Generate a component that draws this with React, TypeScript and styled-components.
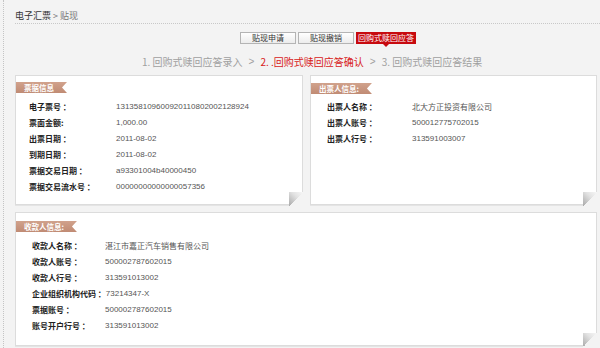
import React from "react";
import styled, { createGlobalStyle } from "styled-components";

const GlobalStyle = createGlobalStyle`
  html, body {
    margin: 0;
    padding: 0;
    background: #f3f3f3;
    font-family: "Noto Sans CJK SC", "Noto Sans", sans-serif;
  }
  * { box-sizing: border-box; }
`;

const Frame = styled.div`
  margin-left: 3px;
  border-left: 1px dotted #c4c4c4;
  min-height: 348px;
  padding: 0 3px 0 11px;
  overflow: hidden;
`;

const Header = styled.div`
  padding-top: 9px;
  line-height: 14px;
  font-size: 9px;
  color: #333;
  border-bottom: 1px dotted #c8c8c8;
  margin-right: -3px;
`;

const Crumb = styled.span`
  color: #777;
`;

const Tabs = styled.div`
  display: flex;
  margin-top: 8px;
  padding-left: 225px;
  gap: 2px;
`;

const Tab = styled.div<{ $active?: boolean }>`
  position: relative;
  height: 12px;
  width: ${(p) => (p.$active ? "60px" : "56px")};
  display: flex;
  align-items: center;
  justify-content: center;
  font-size: 8px;
  line-height: 12px;
  color: ${(p) => (p.$active ? "#fff" : "#333")};
  background: ${(p) =>
    p.$active ? "#c70a0f" : "linear-gradient(#ffffff, #ececec)"};
  border: ${(p) => (p.$active ? "none" : "1px solid #b4b4b4")};
  ${(p) =>
    p.$active &&
    `
    &::after {
      content: "";
      position: absolute;
      left: 50%;
      bottom: -3px;
      margin-left: -3px;
      border-left: 3px solid transparent;
      border-right: 3px solid transparent;
      border-top: 3px solid #c70a0f;
    }
  `}
`;

const Steps = styled.div`
  display: flex;
  align-items: center;
  margin-top: 12px;
  padding-left: 127px;
  height: 12px;
  font-size: 10px;
  line-height: 12px;
  color: #a0a0a0;
  white-space: nowrap;
`;

const Step = styled.span<{ $current?: boolean }>`
  color: ${(p) => (p.$current ? "#d8201a" : "#a0a0a0")};
`;

const Arrow = styled.span`
  margin: 0 6px;
  color: #a0a0a0;
  font-family: "Liberation Sans", sans-serif;
`;

const CardGrid = styled.div`
  display: grid;
  grid-template-columns: 288px 1fr;
  gap: 7px;
  margin-top: 7px;
`;

const Card = styled.div<{ $height: number; $top: number }>`
  position: relative;
  height: ${(p) => p.$height}px;
  background: #fff;
  border: 1px solid #dcdcdc;
  box-shadow: 0 1px 0 #e4e4e4;
  padding-top: ${(p) => p.$top}px;
  display: flex;
  flex-direction: column;
  align-items: flex-start;
  &::after {
    content: "";
    position: absolute;
    right: -1px;
    bottom: -2px;
    width: 14px;
    height: 14px;
    background: linear-gradient(to top left, #f3f3f3 50%, transparent 50%),
      linear-gradient(to top right, #a9a9a9, #e2e2e2 60%, #f7f7f7);
  }
`;

const BottomCard = styled(Card)`
  margin-top: 7px;
`;

const Ribbon = styled.div`
  height: 11px;
  line-height: 11px;
  padding: 0 13px 0 8px;
  font-size: 7.5px;
  font-weight: bold;
  color: #fff;
  white-space: nowrap;
  background: linear-gradient(#d1a28c, #c08b74);
  clip-path: polygon(0 0, 100% 0, calc(100% - 5px) 50%, 100% 100%, 0 100%);
`;

const Rows = styled.div<{ $indent: number; $gap: number }>`
  margin-top: ${(p) => p.$gap}px;
  padding-left: ${(p) => p.$indent}px;
`;

const Row = styled.div`
  display: flex;
  align-items: center;
  height: 16px;
  white-space: nowrap;
`;

const Label = styled.span<{ $width: number }>`
  flex-shrink: 0;
  min-width: ${(p) => p.$width}px;
  font-size: 8px;
  font-weight: bold;
  color: #222;
`;

const Value = styled.span`
  font-family: "Liberation Sans", "Noto Sans CJK SC", sans-serif;
  font-size: 8px;
  color: #555;
`;

type Item = [string, string];

const InfoList: React.FC<{
  items: Item[];
  indent: number;
  labelWidth: number;
  gap: number;
}> = ({ items, indent, labelWidth, gap }) => (
  <Rows $indent={indent} $gap={gap}>
    {items.map(([l, v]) => (
      <Row key={l}>
        <Label $width={labelWidth}>{l}</Label>
        <Value>{v}</Value>
      </Row>
    ))}
  </Rows>
);

const billInfo: Item[] = [
  ["电子票号 ：", "131358109600920110802002128924"],
  ["票面金额:", "1,000.00"],
  ["出票日期 ：", "2011-08-02"],
  ["到期日期 ：", "2011-08-02"],
  ["票据交易日期 ：", "a93301004b40000450"],
  ["票据交易流水号 ：", "00000000000000057356"],
];

const drawerInfo: Item[] = [
  ["出票人名称 ：", "北大方正投资有限公司"],
  ["出票人账号 ：", "500012775702015"],
  ["出票人行号 ：", "313591003007"],
];

const payeeInfo: Item[] = [
  ["收款人名称 ：", "湛江市嘉正汽车销售有限公司"],
  ["收款人账号 ：", "500002787602015"],
  ["收款人行号 ：", "313591013002"],
  ["企业组织机构代码 ：", "73214347-X"],
  ["票据账号 ：", "500002787602015"],
  ["账号开户行号 ：", "313591013002"],
];

export default function App() {
  return (
    <>
      <GlobalStyle />
      <Frame>
        <Header>
          电子汇票 <Crumb>&gt; 贴现</Crumb>
        </Header>
        <Tabs>
          <Tab>贴现申请</Tab>
          <Tab>贴现撤销</Tab>
          <Tab $active>回购式赎回应答</Tab>
        </Tabs>
        <Steps>
          <Step>1. 回购式赎回应答录入</Step>
          <Arrow>&gt;</Arrow>
          <Step $current>2. .回购式赎回应答确认</Step>
          <Arrow>&gt;</Arrow>
          <Step>3. 回购式赎回应答结果</Step>
        </Steps>
        <CardGrid>
          <Card $height={130} $top={6}>
            <Ribbon>票据信息</Ribbon>
            <InfoList items={billInfo} indent={13} labelWidth={87} gap={5} />
          </Card>
          <Card $height={130} $top={7}>
            <Ribbon>出票人信息:</Ribbon>
            <InfoList items={drawerInfo} indent={16} labelWidth={85} gap={4} />
          </Card>
        </CardGrid>
        <BottomCard $height={134} $top={8}>
          <Ribbon>收款人信息:</Ribbon>
          <InfoList items={payeeInfo} indent={16} labelWidth={73} gap={5} />
        </BottomCard>
      </Frame>
    </>
  );
}
